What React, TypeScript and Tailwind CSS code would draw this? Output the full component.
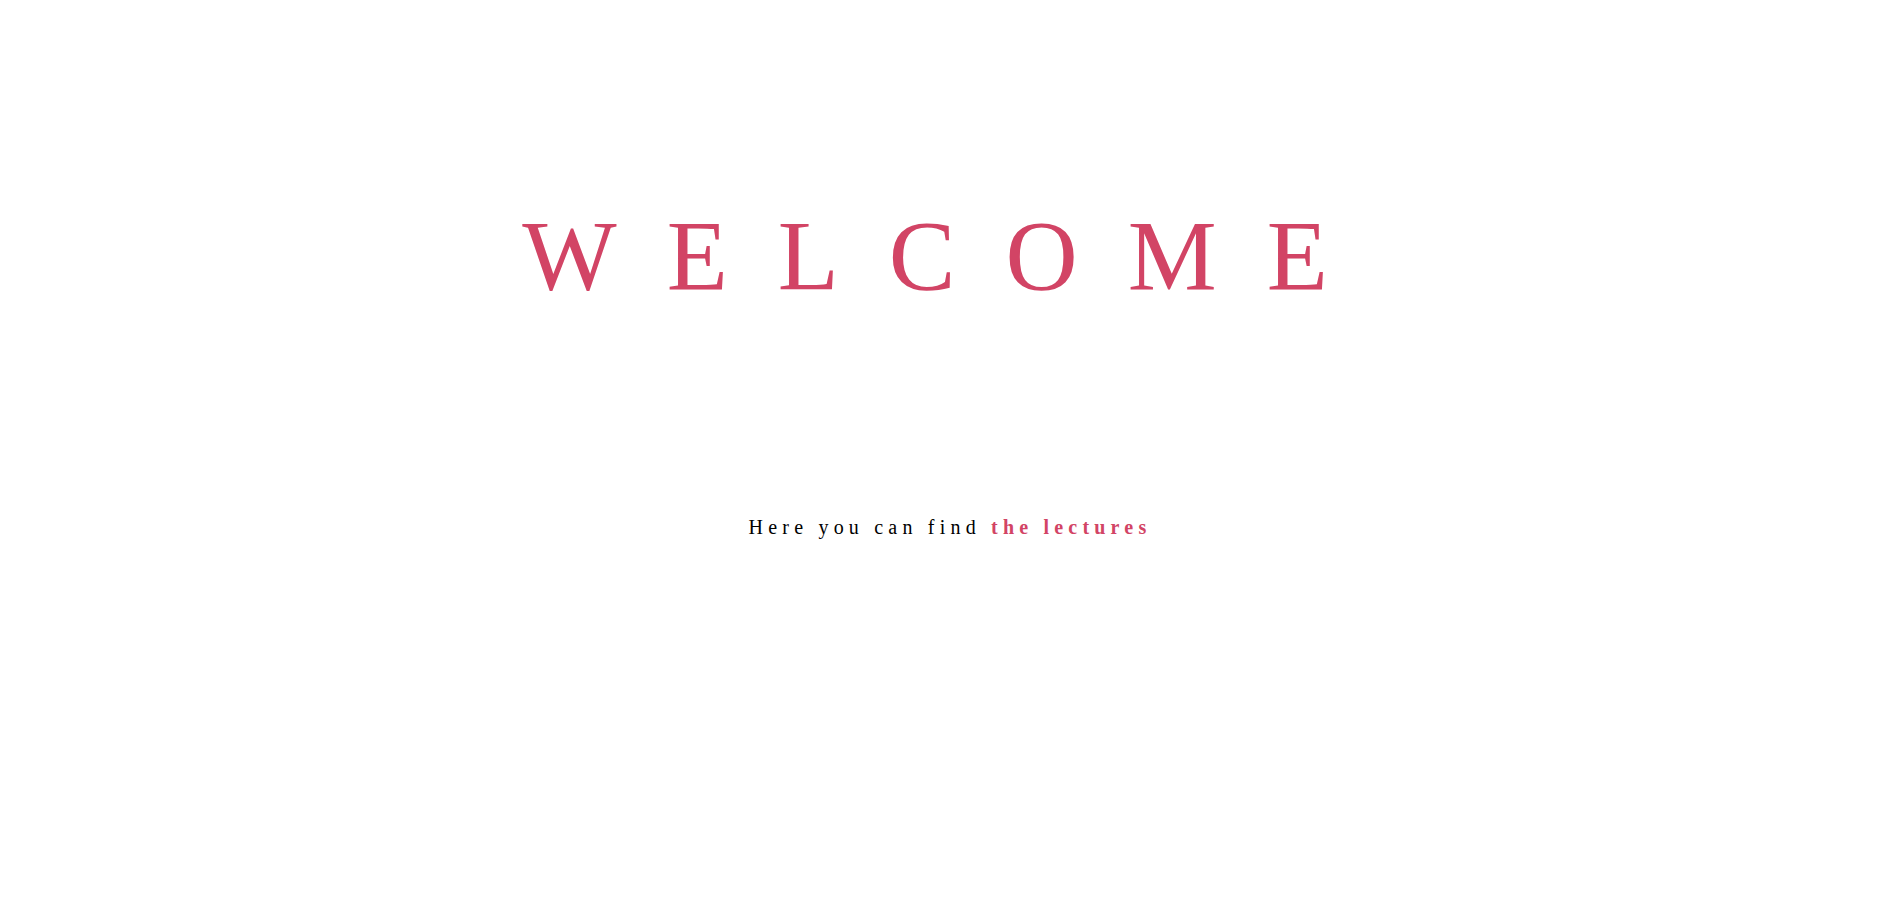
export default function App() {
  return (
    <div className="min-h-screen w-full bg-white flex flex-col items-center font-['Liberation_Serif','Times_New_Roman',serif]">
      <h1 className="mt-[206px] text-[100px] leading-none tracking-[50px] text-[#d24465] font-normal">
        WELCOME
      </h1>
      <p className="mt-[211px] text-[20px] leading-none tracking-[5.2px] text-black">
        Here you can find <span className="font-bold text-[#d24465]">the lectures</span>
      </p>
    </div>
  );
}
